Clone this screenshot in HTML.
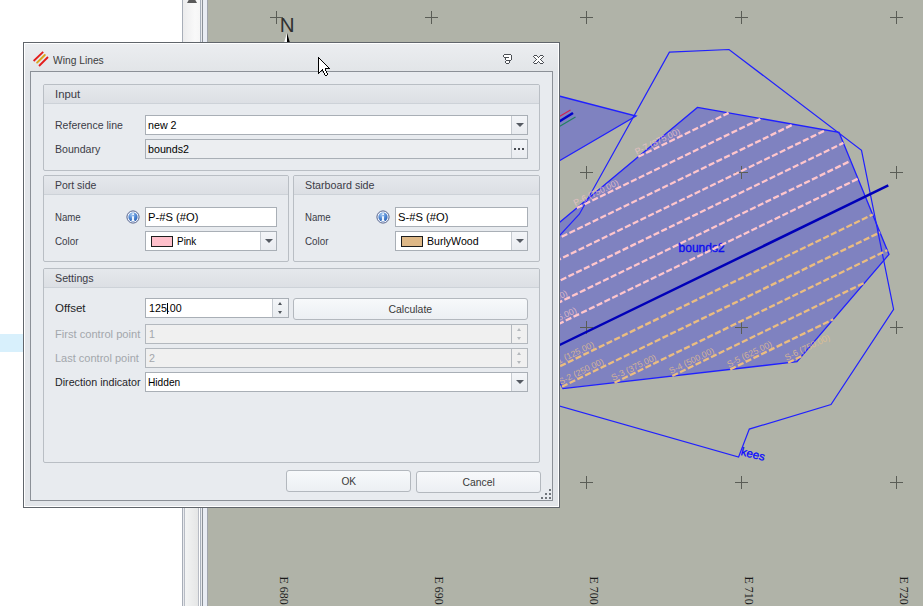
<!DOCTYPE html>
<html><head><meta charset="utf-8">
<style>
html,body{margin:0;padding:0}
body{width:923px;height:606px;position:relative;overflow:hidden;background:#fff;font-family:"Liberation Sans",sans-serif}
.a{position:absolute;box-sizing:border-box}
.t{position:absolute;white-space:pre;font-size:10.7px;line-height:13px;color:#3b3b46}
.dis{color:#a3a7ac}
.box{position:absolute;box-sizing:border-box;border:1px solid #a9afb6;background:#fff}
.grp{position:absolute;box-sizing:border-box;border:1px solid #b9bec4;border-radius:2px;background:#e8ebef}
.gh{position:absolute;left:0;right:0;top:0;height:18px;background:linear-gradient(#e5e8ec,#dcdfe4);border-bottom:1px solid #cdd2d8;border-radius:1px 1px 0 0}
.btn{position:absolute;box-sizing:border-box;border:1px solid #b3b8be;border-radius:3px;background:linear-gradient(#f7f9fb,#eceff3)}
.dd{position:absolute;top:0;bottom:0;right:0;width:15px;border-left:1px solid #c5cad0;background:linear-gradient(#f3f5f8,#e9ecf0)}
.arr{position:absolute;left:3.5px;top:7px;width:0;height:0;border-left:4px solid transparent;border-right:4px solid transparent;border-top:4.5px solid #555a62}
.up{position:absolute;left:5px;width:0;height:0;border-left:2.5px solid transparent;border-right:2.5px solid transparent;border-bottom:3px solid #50555c}
.dn{position:absolute;left:5px;width:0;height:0;border-left:2.5px solid transparent;border-right:2.5px solid transparent;border-top:3px solid #50555c}
.dis .up{border-bottom-color:#b4b8bc}.dis .dn{border-top-color:#b4b8bc}
</style></head><body>
<!-- left panel -->
<div class="a" style="left:0;top:334px;width:23px;height:18px;background:#d8f0fc"></div>
<!-- scrollbar / splitter -->
<div class="a" style="left:182px;top:0;width:1px;height:606px;background:#a8aeb8"></div>
<div class="a" style="left:183px;top:0;width:17px;height:42px;background:linear-gradient(90deg,#ececed,#f9f9f9 70%,#f6f6f6)"></div>
<div class="a" style="left:183px;top:42px;width:1px;height:564px;background:#e8eaee"></div>
<div class="a" style="left:184px;top:42px;width:1px;height:564px;background:#b8bcc4"></div>
<div class="a" style="left:185px;top:42px;width:13px;height:564px;background:linear-gradient(90deg,#f3f4f4,#e5e6e6)"></div>
<div class="a" style="left:198px;top:42px;width:1px;height:564px;background:#b8bcc4"></div>
<div class="a" style="left:199px;top:42px;width:1px;height:564px;background:#fff"></div>
<div class="a" style="left:200px;top:0;width:1px;height:606px;background:#a8b0bc"></div>
<div class="a" style="left:201px;top:0;width:1px;height:606px;background:#e8eaee"></div>
<div class="a" style="left:202px;top:0;width:1px;height:606px;background:#8a9098"></div>
<div class="a" style="left:203px;top:0;width:4px;height:606px;background:#e8ecf4"></div>
<div class="a" style="left:186.5px;top:-6px;width:0;height:0;border-left:5px solid transparent;border-right:5px solid transparent;border-bottom:9px solid #5a5a5a"></div>
<svg width="923" height="606" viewBox="0 0 923 606" style="position:absolute;left:0;top:0">
<rect x="207" y="0" width="716" height="606" fill="#b0b3a8"/>
<text transform="translate(280.3,576.6) rotate(90) scale(0.88,1)" font-family="Liberation Serif" font-size="13.5" fill="#1a1a1a">E 680</text>
<text transform="translate(435.3,576.6) rotate(90) scale(0.88,1)" font-family="Liberation Serif" font-size="13.5" fill="#1a1a1a">E 690</text>
<text transform="translate(590.3,576.6) rotate(90) scale(0.88,1)" font-family="Liberation Serif" font-size="13.5" fill="#1a1a1a">E 700</text>
<text transform="translate(745.3,576.6) rotate(90) scale(0.88,1)" font-family="Liberation Serif" font-size="13.5" fill="#1a1a1a">E 710</text>
<text transform="translate(900.3,576.6) rotate(90) scale(0.88,1)" font-family="Liberation Serif" font-size="13.5" fill="#1a1a1a">E 720</text>
<text x="0" y="0" font-family="Liberation Sans" font-size="20.5" fill="#303030" transform="translate(279.8,32)">N</text>
<path d="M287 33 L283 46 L287 44 Z" fill="#fff"/><path d="M287 33 L291 46 L287 44 Z" fill="#000"/>
<path d="M500 80 L559 96 L636 116 L559 161 L500 200 Z" fill="#0000ff" fill-opacity="0.275" stroke="#2020ff" stroke-width="1.3"/>
<path d="M556 118.5 L570.5 110" stroke="#d02050" stroke-width="1.2"/>
<path d="M556 123.5 L573 113" stroke="#0000c8" stroke-width="2.6"/>
<path d="M556 128.5 L575.5 117" stroke="#208060" stroke-width="1.2"/>
<polygon points="697.4,107.4 839,132.3 889,254.4 797,361.7 563,388.6 552,369.3 534.5,334.9 525.3,317.8 505,290 490,280.4" fill="#0000ff" fill-opacity="0.275" stroke="#2020ff" stroke-width="1.3"/>
<path d="M270 17.5H283M276.5 11V24" stroke="#5a5d56" stroke-width="1" fill="none"/>
<path d="M270 172.5H283M276.5 166V179" stroke="#5a5d56" stroke-width="1" fill="none"/>
<path d="M270 327.5H283M276.5 321V334" stroke="#5a5d56" stroke-width="1" fill="none"/>
<path d="M270 482.5H283M276.5 476V489" stroke="#5a5d56" stroke-width="1" fill="none"/>
<path d="M425 17.5H438M431.5 11V24" stroke="#5a5d56" stroke-width="1" fill="none"/>
<path d="M425 172.5H438M431.5 166V179" stroke="#5a5d56" stroke-width="1" fill="none"/>
<path d="M425 327.5H438M431.5 321V334" stroke="#5a5d56" stroke-width="1" fill="none"/>
<path d="M425 482.5H438M431.5 476V489" stroke="#5a5d56" stroke-width="1" fill="none"/>
<path d="M580 17.5H593M586.5 11V24" stroke="#5a5d56" stroke-width="1" fill="none"/>
<path d="M580 172.5H593M586.5 166V179" stroke="#5a5d56" stroke-width="1" fill="none"/>
<path d="M580 327.5H593M586.5 321V334" stroke="#5a5d56" stroke-width="1" fill="none"/>
<path d="M580 482.5H593M586.5 476V489" stroke="#5a5d56" stroke-width="1" fill="none"/>
<path d="M735 17.5H748M741.5 11V24" stroke="#5a5d56" stroke-width="1" fill="none"/>
<path d="M735 172.5H748M741.5 166V179" stroke="#5a5d56" stroke-width="1" fill="none"/>
<path d="M735 327.5H748M741.5 321V334" stroke="#5a5d56" stroke-width="1" fill="none"/>
<path d="M735 482.5H748M741.5 476V489" stroke="#5a5d56" stroke-width="1" fill="none"/>
<path d="M890 17.5H903M896.5 11V24" stroke="#5a5d56" stroke-width="1" fill="none"/>
<path d="M890 172.5H903M896.5 166V179" stroke="#5a5d56" stroke-width="1" fill="none"/>
<path d="M890 327.5H903M896.5 321V334" stroke="#5a5d56" stroke-width="1" fill="none"/>
<path d="M890 482.5H903M896.5 476V489" stroke="#5a5d56" stroke-width="1" fill="none"/>
<text x="678.6" y="251.8" font-family="Liberation Sans" font-size="12" fill="#0c0cf0" stroke="#0c0cf0" stroke-width="0.35">bounds2</text>
<polygon points="669.4,52.2 729,49.5 861.5,150.3 893.6,309.4 831,404.6 749.3,429.1 738.6,457 500,389 500,300 579.3,214.2" fill="none" stroke="#2020ff" stroke-width="1.2"/>
<text transform="translate(740.2,455) rotate(14)" font-family="Liberation Sans" font-size="11.6" fill="#0a0aff" stroke="#0a0aff" stroke-width="0.3">kees</text>
<path d="M638.3 156.7L728.6 112.9" stroke="#ffc6cc" stroke-width="2.3" stroke-dasharray="6.2 2.4"/>
<text transform="translate(636.8,154.7) rotate(-25.89)" font-family="Liberation Sans" font-size="8.8" fill="#f0c4c8" fill-opacity="0.8">P-7 (875.00)</text>
<path d="M576.8 208.0L761.0 118.6" stroke="#ffc6cc" stroke-width="2.3" stroke-dasharray="6.2 2.4"/>
<text transform="translate(575.3,206.0) rotate(-25.89)" font-family="Liberation Sans" font-size="8.8" fill="#f0c4c8" fill-opacity="0.8">P-6 (750.00)</text>
<path d="M515.3 259.3L793.4 124.3" stroke="#ffc6cc" stroke-width="2.3" stroke-dasharray="6.2 2.4"/>
<text transform="translate(513.8,257.3) rotate(-25.89)" font-family="Liberation Sans" font-size="8.8" fill="#f0c4c8" fill-opacity="0.8">P-5 (625.00)</text>
<path d="M501.2 287.6L825.9 130.0" stroke="#ffc6cc" stroke-width="2.3" stroke-dasharray="6.2 2.4"/>
<text transform="translate(499.7,285.6) rotate(-25.89)" font-family="Liberation Sans" font-size="8.8" fill="#f0c4c8" fill-opacity="0.8">P-4 (500.00)</text>
<path d="M514.3 302.7L843.4 142.9" stroke="#ffc6cc" stroke-width="2.3" stroke-dasharray="6.2 2.4"/>
<text transform="translate(512.8,300.7) rotate(-25.89)" font-family="Liberation Sans" font-size="8.8" fill="#f0c4c8" fill-opacity="0.8">P-3 (375.00)</text>
<path d="M525.7 318.6L850.7 160.8" stroke="#ffc6cc" stroke-width="2.3" stroke-dasharray="6.2 2.4"/>
<text transform="translate(524.2,316.6) rotate(-25.89)" font-family="Liberation Sans" font-size="8.8" fill="#f0c4c8" fill-opacity="0.8">P-2 (250.00)</text>
<path d="M534.8 335.6L858.0 178.7" stroke="#ffc6cc" stroke-width="2.3" stroke-dasharray="6.2 2.4"/>
<text transform="translate(533.3,333.6) rotate(-25.89)" font-family="Liberation Sans" font-size="8.8" fill="#f0c4c8" fill-opacity="0.8">P-1 (125.00)</text>
<path d="M552.4 369.9L872.7 214.5" stroke="#ebbd80" stroke-width="2.3" stroke-dasharray="6.2 2.4"/>
<text transform="translate(550.9,367.9) rotate(-25.89)" font-family="Liberation Sans" font-size="8.8" fill="#e6c08c" fill-opacity="0.8">S-1 (125.00)</text>
<path d="M561.9 386.7L880.0 232.4" stroke="#ebbd80" stroke-width="2.3" stroke-dasharray="6.2 2.4"/>
<text transform="translate(560.4,384.7) rotate(-25.89)" font-family="Liberation Sans" font-size="8.8" fill="#e6c08c" fill-opacity="0.8">S-2 (250.00)</text>
<path d="M614.5 382.7L887.3 250.2" stroke="#ebbd80" stroke-width="2.3" stroke-dasharray="6.2 2.4"/>
<text transform="translate(613.0,380.7) rotate(-25.89)" font-family="Liberation Sans" font-size="8.8" fill="#e6c08c" fill-opacity="0.8">S-3 (375.00)</text>
<path d="M672.3 376.0L864.8 282.6" stroke="#ebbd80" stroke-width="2.3" stroke-dasharray="6.2 2.4"/>
<text transform="translate(670.8,374.0) rotate(-25.89)" font-family="Liberation Sans" font-size="8.8" fill="#e6c08c" fill-opacity="0.8">S-4 (500.00)</text>
<path d="M730.2 369.4L833.3 319.3" stroke="#ebbd80" stroke-width="2.3" stroke-dasharray="6.2 2.4"/>
<text transform="translate(728.7,367.4) rotate(-25.89)" font-family="Liberation Sans" font-size="8.8" fill="#e6c08c" fill-opacity="0.8">S-5 (625.00)</text>
<path d="M788.1 362.7L801.8 356.0" stroke="#ebbd80" stroke-width="2.3" stroke-dasharray="6.2 2.4"/>
<text transform="translate(786.6,360.7) rotate(-25.89)" font-family="Liberation Sans" font-size="8.8" fill="#e6c08c" fill-opacity="0.8">S-6 (750.00)</text>
<path d="M540 354.5 L888.3 185.45" stroke="#0000b8" stroke-width="2.5"/>
</svg>
<div class="a" style="left:207px;top:0;width:1px;height:606px;background:#a0a4ac"></div>

<!-- dialog -->
<div class="a" style="left:23px;top:42px;width:537px;height:466px;border:1px solid #60656b;background:#e2e5e9">
  <div class="a" style="left:0;top:0;right:0;bottom:0;border:1px solid #fff"></div>
  <div class="a" style="left:1px;top:1px;right:1px;height:27px;background:linear-gradient(#ebedf0,#e2e5e8)"></div>
</div>
<!-- title icon -->
<svg class="a" style="left:30px;top:48px" width="22" height="22" viewBox="0 0 22 22">
  <path d="M3.6 13 L13.2 3.9" stroke="#e31b1b" stroke-width="1.8"/>
  <path d="M7.1 14.6 L14.8 7" stroke="#d9a51e" stroke-width="1.9" stroke-linecap="round"/>
  <path d="M9 18 L18 9" stroke="#e31b1b" stroke-width="1.8"/>
</svg>
<svg class="a" style="left:0;top:0" width="923" height="606" shape-rendering="crispEdges"><rect x="504" y="55" width="7" height="1" fill="#fff"/><rect x="504" y="56" width="7" height="1" fill="#fff"/><rect x="509" y="57" width="2" height="1" fill="#fff"/><rect x="506" y="58" width="5" height="1" fill="#fff"/><rect x="506" y="59" width="5" height="1" fill="#fff"/><rect x="506" y="61" width="3" height="1" fill="#fff"/><rect x="506" y="62" width="3" height="1" fill="#fff"/><rect x="504" y="54" width="7" height="1" fill="#4b4f55"/><rect x="503" y="55" width="1" height="1" fill="#4b4f55"/><rect x="511" y="55" width="1" height="1" fill="#4b4f55"/><rect x="503" y="56" width="1" height="1" fill="#4b4f55"/><rect x="511" y="56" width="1" height="1" fill="#4b4f55"/><rect x="504" y="57" width="5" height="1" fill="#4b4f55"/><rect x="511" y="57" width="1" height="1" fill="#4b4f55"/><rect x="505" y="58" width="1" height="1" fill="#4b4f55"/><rect x="511" y="58" width="1" height="1" fill="#4b4f55"/><rect x="505" y="59" width="1" height="1" fill="#4b4f55"/><rect x="511" y="59" width="1" height="1" fill="#4b4f55"/><rect x="506" y="60" width="5" height="1" fill="#4b4f55"/><rect x="505" y="61" width="1" height="1" fill="#4b4f55"/><rect x="509" y="61" width="1" height="1" fill="#4b4f55"/><rect x="505" y="62" width="1" height="1" fill="#4b4f55"/><rect x="509" y="62" width="1" height="1" fill="#4b4f55"/><rect x="506" y="63" width="3" height="1" fill="#4b4f55"/><rect x="534" y="56" width="3" height="1" fill="#fff"/><rect x="540" y="56" width="3" height="1" fill="#fff"/><rect x="535" y="57" width="3" height="1" fill="#fff"/><rect x="539" y="57" width="3" height="1" fill="#fff"/><rect x="536" y="58" width="5" height="1" fill="#fff"/><rect x="537" y="59" width="3" height="1" fill="#fff"/><rect x="536" y="60" width="5" height="1" fill="#fff"/><rect x="535" y="61" width="3" height="1" fill="#fff"/><rect x="539" y="61" width="3" height="1" fill="#fff"/><rect x="534" y="62" width="3" height="1" fill="#fff"/><rect x="540" y="62" width="3" height="1" fill="#fff"/><rect x="534" y="55" width="3" height="1" fill="#4b4f55"/><rect x="540" y="55" width="3" height="1" fill="#4b4f55"/><rect x="533" y="56" width="1" height="1" fill="#4b4f55"/><rect x="537" y="56" width="1" height="1" fill="#4b4f55"/><rect x="539" y="56" width="1" height="1" fill="#4b4f55"/><rect x="543" y="56" width="1" height="1" fill="#4b4f55"/><rect x="534" y="57" width="1" height="1" fill="#4b4f55"/><rect x="538" y="57" width="1" height="1" fill="#4b4f55"/><rect x="542" y="57" width="1" height="1" fill="#4b4f55"/><rect x="535" y="58" width="1" height="1" fill="#4b4f55"/><rect x="541" y="58" width="1" height="1" fill="#4b4f55"/><rect x="536" y="59" width="1" height="1" fill="#4b4f55"/><rect x="540" y="59" width="1" height="1" fill="#4b4f55"/><rect x="535" y="60" width="1" height="1" fill="#4b4f55"/><rect x="541" y="60" width="1" height="1" fill="#4b4f55"/><rect x="534" y="61" width="1" height="1" fill="#4b4f55"/><rect x="538" y="61" width="1" height="1" fill="#4b4f55"/><rect x="542" y="61" width="1" height="1" fill="#4b4f55"/><rect x="533" y="62" width="1" height="1" fill="#4b4f55"/><rect x="537" y="62" width="1" height="1" fill="#4b4f55"/><rect x="539" y="62" width="1" height="1" fill="#4b4f55"/><rect x="543" y="62" width="1" height="1" fill="#4b4f55"/><rect x="534" y="63" width="3" height="1" fill="#4b4f55"/><rect x="540" y="63" width="3" height="1" fill="#4b4f55"/></svg>
<!-- inner frame -->
<div class="a" style="left:30px;top:71px;width:523px;height:430px;border:1px solid #8b9097;background:#e8ebef"></div>

<!-- Input group -->
<div class="grp" style="left:43px;top:84px;width:497px;height:87px"><div class="gh"></div></div>
<div class="box" style="left:145px;top:115px;width:383px;height:20px"><div class="dd"><div class="arr"></div></div></div>
<div class="box" style="left:145px;top:139px;width:383px;height:20px;background:#eceef1"><div class="dd"></div></div>
<div class="a" style="left:514px;top:148px;width:2px;height:2px;background:#4a4e55;box-shadow:4px 0 #4a4e55,8px 0 #4a4e55"></div>

<!-- Port group -->
<div class="grp" style="left:43px;top:175px;width:246px;height:87px"><div class="gh"></div></div>
<svg class="a" style="left:126px;top:210px" width="14" height="14" viewBox="0 0 14 14">
  <defs><radialGradient id="ig" cx="0.4" cy="0.25" r="0.8"><stop offset="0" stop-color="#a9ccf4"/><stop offset="0.55" stop-color="#4f86d2"/><stop offset="1" stop-color="#2b5fb0"/></radialGradient></defs>
  <circle cx="7" cy="7" r="6.1" fill="#f4f7fc" stroke="#56648f" stroke-width="1"/>
  <circle cx="7" cy="7" r="4.6" fill="url(#ig)"/>
  <path d="M6.1 6.2 H7.9 V10.2 H8.6 V11 H5.5 V10.2 H6.1 Z" fill="#fff"/><ellipse cx="7.1" cy="4.1" rx="1" ry="0.9" fill="#fff"/>
</svg>
<div class="box" style="left:145px;top:207px;width:132px;height:20px"></div>
<div class="box" style="left:145px;top:231px;width:132px;height:20px"><div class="dd"><div class="arr"></div></div></div>
<div class="a" style="left:151px;top:236px;width:22px;height:11px;border:1px solid #1e1e1e;background:#ffc0cb"></div>

<!-- Starboard group -->
<div class="grp" style="left:293px;top:175px;width:247px;height:87px"><div class="gh"></div></div>
<svg class="a" style="left:376px;top:210px" width="14" height="14" viewBox="0 0 14 14">
  <circle cx="7" cy="7" r="6.1" fill="#f4f7fc" stroke="#56648f" stroke-width="1"/>
  <circle cx="7" cy="7" r="4.6" fill="url(#ig)"/>
  <path d="M6.1 6.2 H7.9 V10.2 H8.6 V11 H5.5 V10.2 H6.1 Z" fill="#fff"/><ellipse cx="7.1" cy="4.1" rx="1" ry="0.9" fill="#fff"/>
</svg>
<div class="box" style="left:395px;top:207px;width:133px;height:20px"></div>
<div class="box" style="left:395px;top:231px;width:133px;height:20px"><div class="dd"><div class="arr"></div></div></div>
<div class="a" style="left:401px;top:236px;width:22px;height:11px;border:1px solid #1e1e1e;background:#deb887"></div>

<!-- Settings group -->
<div class="grp" style="left:43px;top:268px;width:497px;height:195px"><div class="gh"></div></div>
<div class="box" style="left:145px;top:298px;width:144px;height:20px"><div class="dd"><div class="up" style="top:3px"></div><div class="dn" style="top:12px"></div></div></div>
<div class="a" style="left:167px;top:303px;width:1px;height:11px;background:#000"></div>
<div class="btn" style="left:293px;top:298px;width:235px;height:22px"></div>
<div class="box dis" style="left:145px;top:324px;width:383px;height:20px;background:#f0f0f0;border-color:#b3b8be"><div class="dd" style="border-left-color:#b3b8be;background:#f0f0f0"><div class="up" style="top:3px"></div><div class="dn" style="top:12px"></div></div></div>
<div class="box dis" style="left:145px;top:348px;width:383px;height:20px;background:#f0f0f0;border-color:#b3b8be"><div class="dd" style="border-left-color:#b3b8be;background:#f0f0f0"><div class="up" style="top:3px"></div><div class="dn" style="top:12px"></div></div></div>
<div class="box" style="left:145px;top:372px;width:383px;height:20px"><div class="dd"><div class="arr"></div></div></div>

<!-- buttons -->
<div class="btn" style="left:286px;top:470px;width:125px;height:22px"></div>
<div class="btn" style="left:416px;top:471px;width:125px;height:22px"></div>
<!-- grip -->
<div class="a" style="left:549px;top:489px;width:2px;height:2px;background:#70757b;box-shadow:-4px 4px #70757b,0 4px #70757b,-8px 8px #70757b,-4px 8px #70757b,0 8px #70757b"></div>
<div class="t" style="left:53px;top:54px;font-size:10.7px;color:#3c3c3c;transform:scaleX(0.96);transform-origin:0 0">Wing Lines</div>
<div class="t" style="left:55px;top:88px;font-size:10.7px;color:#3b3b46;transform:scaleX(1.06);transform-origin:0 0">Input</div>
<div class="t" style="left:55px;top:119px;font-size:10.7px;color:#3b3b46;transform:scaleX(0.985);transform-origin:0 0">Reference line</div>
<div class="t" style="left:148px;top:119px;font-size:10.7px;color:#000">new 2</div>
<div class="t" style="left:55px;top:143px;font-size:10.7px;color:#3b3b46;transform:scaleX(0.99);transform-origin:0 0">Boundary</div>
<div class="t" style="left:148px;top:143px;font-size:10.7px;color:#000">bounds2</div>
<div class="t" style="left:55px;top:179px;font-size:10.7px;color:#3b3b46;transform:scaleX(0.98);transform-origin:0 0">Port side</div>
<div class="t" style="left:55px;top:211px;font-size:10.7px;color:#3b3b46;transform:scaleX(0.9);transform-origin:0 0">Name</div>
<div class="t" style="left:148px;top:211px;font-size:10.7px;color:#000;transform:scaleX(1.05);transform-origin:0 0">P-#S (#O)</div>
<div class="t" style="left:55px;top:235px;font-size:10.7px;color:#3b3b46;transform:scaleX(0.92);transform-origin:0 0">Color</div>
<div class="t" style="left:177px;top:235px;font-size:10.7px;color:#000;transform:scaleX(0.93);transform-origin:0 0">Pink</div>
<div class="t" style="left:305px;top:179px;font-size:10.7px;color:#3b3b46">Starboard side</div>
<div class="t" style="left:305px;top:211px;font-size:10.7px;color:#3b3b46;transform:scaleX(0.9);transform-origin:0 0">Name</div>
<div class="t" style="left:398px;top:211px;font-size:10.7px;color:#000;transform:scaleX(1.05);transform-origin:0 0">S-#S (#O)</div>
<div class="t" style="left:305px;top:235px;font-size:10.7px;color:#3b3b46;transform:scaleX(0.92);transform-origin:0 0">Color</div>
<div class="t" style="left:427px;top:235px;font-size:10.7px;color:#000;transform:scaleX(0.99);transform-origin:0 0">BurlyWood</div>
<div class="t" style="left:55px;top:272px;font-size:10.7px;color:#3b3b46">Settings</div>
<div class="t" style="left:55px;top:302px;font-size:10.7px;color:#1e1e28;transform:scaleX(1.08);transform-origin:0 0">Offset</div>
<div class="t" style="left:149px;top:302px;font-size:10.7px;color:#000">125.00</div>
<div class="t dis" style="left:55px;top:328px;font-size:10.7px;transform:scaleX(1.04);transform-origin:0 0">First control point</div>
<div class="t dis" style="left:149px;top:328px;font-size:10.7px">1</div>
<div class="t dis" style="left:55px;top:352px;font-size:10.7px;transform:scaleX(1.03);transform-origin:0 0">Last control point</div>
<div class="t dis" style="left:149px;top:352px;font-size:10.7px">2</div>
<div class="t" style="left:55px;top:376px;font-size:10.7px;color:#1e1e28">Direction indicator</div>
<div class="t" style="left:148px;top:376px;font-size:10.7px;color:#000;transform:scaleX(0.95);transform-origin:0 0">Hidden</div>
<div class="t" style="left:293px;top:303px;width:235px;text-align:center;font-size:10.7px;color:#3a3a3a"><span style="display:inline-block;transform:scaleX(0.98)">Calculate</span></div>
<div class="t" style="left:286px;top:475px;width:125px;text-align:center;font-size:10.7px;color:#3a3a3a"><span style="display:inline-block;transform:scaleX(0.95)">OK</span></div>
<div class="t" style="left:416px;top:476px;width:125px;text-align:center;font-size:10.7px;color:#3a3a3a"><span style="display:inline-block;transform:scaleX(0.97)">Cancel</span></div>
<svg class="a" style="left:0;top:0" width="923" height="606" shape-rendering="crispEdges"><rect x="319" y="59" width="1" height="1" fill="#fff"/><rect x="319" y="60" width="2" height="1" fill="#fff"/><rect x="319" y="61" width="3" height="1" fill="#fff"/><rect x="319" y="62" width="4" height="1" fill="#fff"/><rect x="319" y="63" width="5" height="1" fill="#fff"/><rect x="319" y="64" width="6" height="1" fill="#fff"/><rect x="319" y="65" width="7" height="1" fill="#fff"/><rect x="319" y="66" width="8" height="1" fill="#fff"/><rect x="319" y="67" width="9" height="1" fill="#fff"/><rect x="319" y="68" width="6" height="1" fill="#fff"/><rect x="319" y="69" width="3" height="1" fill="#fff"/><rect x="323" y="69" width="2" height="1" fill="#fff"/><rect x="319" y="70" width="2" height="1" fill="#fff"/><rect x="323" y="70" width="2" height="1" fill="#fff"/><rect x="319" y="71" width="1" height="1" fill="#fff"/><rect x="324" y="71" width="2" height="1" fill="#fff"/><rect x="324" y="72" width="2" height="1" fill="#fff"/><rect x="325" y="73" width="2" height="1" fill="#fff"/><rect x="325" y="74" width="2" height="1" fill="#fff"/><rect x="318" y="57" width="1" height="1" fill="#000"/><rect x="318" y="58" width="2" height="1" fill="#000"/><rect x="318" y="59" width="1" height="1" fill="#000"/><rect x="320" y="59" width="1" height="1" fill="#000"/><rect x="318" y="60" width="1" height="1" fill="#000"/><rect x="321" y="60" width="1" height="1" fill="#000"/><rect x="318" y="61" width="1" height="1" fill="#000"/><rect x="322" y="61" width="1" height="1" fill="#000"/><rect x="318" y="62" width="1" height="1" fill="#000"/><rect x="323" y="62" width="1" height="1" fill="#000"/><rect x="318" y="63" width="1" height="1" fill="#000"/><rect x="324" y="63" width="1" height="1" fill="#000"/><rect x="318" y="64" width="1" height="1" fill="#000"/><rect x="325" y="64" width="1" height="1" fill="#000"/><rect x="318" y="65" width="1" height="1" fill="#000"/><rect x="326" y="65" width="1" height="1" fill="#000"/><rect x="318" y="66" width="1" height="1" fill="#000"/><rect x="327" y="66" width="1" height="1" fill="#000"/><rect x="318" y="67" width="1" height="1" fill="#000"/><rect x="328" y="67" width="1" height="1" fill="#000"/><rect x="318" y="68" width="1" height="1" fill="#000"/><rect x="325" y="68" width="5" height="1" fill="#000"/><rect x="318" y="69" width="1" height="1" fill="#000"/><rect x="322" y="69" width="1" height="1" fill="#000"/><rect x="325" y="69" width="1" height="1" fill="#000"/><rect x="318" y="70" width="1" height="1" fill="#000"/><rect x="321" y="70" width="2" height="1" fill="#000"/><rect x="325" y="70" width="1" height="1" fill="#000"/><rect x="318" y="71" width="1" height="1" fill="#000"/><rect x="320" y="71" width="1" height="1" fill="#000"/><rect x="323" y="71" width="1" height="1" fill="#000"/><rect x="326" y="71" width="1" height="1" fill="#000"/><rect x="318" y="72" width="2" height="1" fill="#000"/><rect x="323" y="72" width="1" height="1" fill="#000"/><rect x="326" y="72" width="1" height="1" fill="#000"/><rect x="318" y="73" width="1" height="1" fill="#000"/><rect x="324" y="73" width="1" height="1" fill="#000"/><rect x="327" y="73" width="1" height="1" fill="#000"/><rect x="324" y="74" width="1" height="1" fill="#000"/><rect x="327" y="74" width="1" height="1" fill="#000"/><rect x="325" y="75" width="2" height="1" fill="#000"/></svg>
</body></html>
